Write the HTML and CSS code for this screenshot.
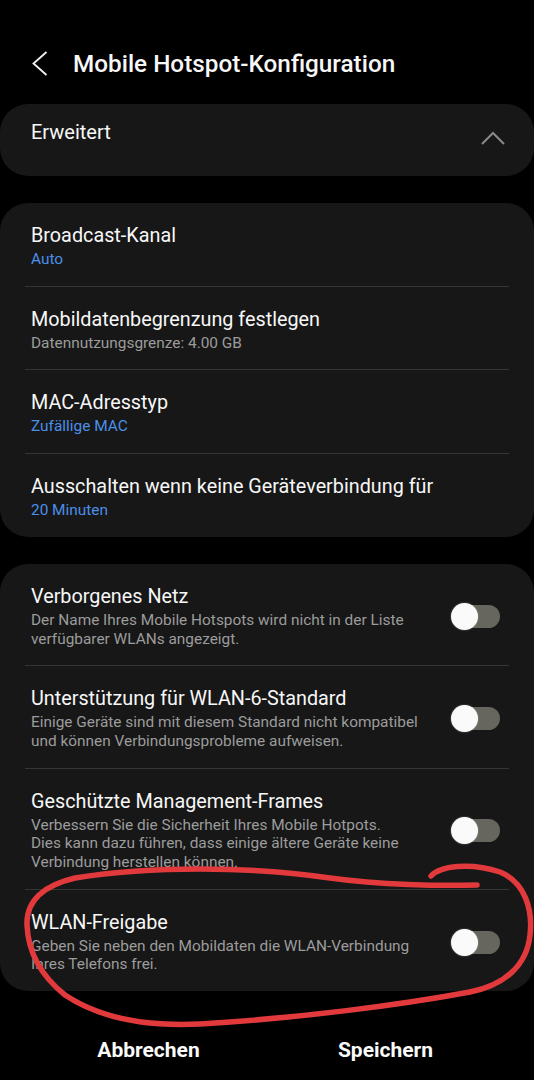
FILE: index.html
```html
<!DOCTYPE html>
<html lang="de">
<head>
    <meta charset="UTF-8">
    <meta name="viewport" content="width=device-width, initial-scale=1.0">
    <title>Mobile Hotspot-Konfiguration</title>
    <link rel="stylesheet" href="styles.css">
</head>
<body>

    <header class="topbar">
        <svg class="back-icon" viewBox="0 0 16 26"><path d="M14.5 1 L1.5 12.5 L14.5 24"/></svg>
        <h1>Mobile Hotspot-Konfiguration</h1>
    </header>

    <main>
        <section class="card expander">
            <span class="expander-title">Erweitert</span>
            <svg class="chevron-up" viewBox="0 0 24 14"><path d="M1 13 L12 2 L23 13"/></svg>
        </section>

        <section class="card list">
            <div class="row">
                <div class="row-text">
                    <p class="row-title">Broadcast-Kanal</p>
                    <p class="row-sub accent">Auto</p>
                </div>
            </div>
            <div class="row">
                <div class="row-text">
                    <p class="row-title">Mobildatenbegrenzung festlegen</p>
                    <p class="row-sub">Datennutzungsgrenze: 4.00 GB</p>
                </div>
            </div>
            <div class="row">
                <div class="row-text">
                    <p class="row-title">MAC-Adresstyp</p>
                    <p class="row-sub accent">Zufällige MAC</p>
                </div>
            </div>
            <div class="row">
                <div class="row-text">
                    <p class="row-title">Ausschalten wenn keine Geräteverbindung für</p>
                    <p class="row-sub accent">20 Minuten</p>
                </div>
            </div>
        </section>

        <section class="card list">
            <div class="row">
                <div class="row-text">
                    <p class="row-title">Verborgenes Netz</p>
                    <p class="row-sub">Der Name Ihres Mobile Hotspots wird nicht in der Liste<br>verfügbarer WLANs angezeigt.</p>
                </div>
                <span class="switch"></span>
            </div>
            <div class="row">
                <div class="row-text">
                    <p class="row-title">Unterstützung für WLAN-6-Standard</p>
                    <p class="row-sub">Einige Geräte sind mit diesem Standard nicht kompatibel<br>und können Verbindungsprobleme aufweisen.</p>
                </div>
                <span class="switch"></span>
            </div>
            <div class="row">
                <div class="row-text">
                    <p class="row-title">Geschützte Management-Frames</p>
                    <p class="row-sub">Verbessern Sie die Sicherheit Ihres Mobile Hotpots.<br>Dies kann dazu führen, dass einige ältere Geräte keine<br>Verbindung herstellen können.</p>
                </div>
                <span class="switch"></span>
            </div>
            <div class="row">
                <div class="row-text">
                    <p class="row-title">WLAN-Freigabe</p>
                    <p class="row-sub">Geben Sie neben den Mobildaten die WLAN-Verbindung<br>Ihres Telefons frei.</p>
                </div>
                <span class="switch"></span>
            </div>
        </section>
    </main>

    <footer class="actions">
        <button>Abbrechen</button>
        <button>Speichern</button>
    </footer>

    <!-- rote Markierung um WLAN-Freigabe -->
    <svg class="scribble" viewBox="0 0 534 1080">
        <path d="M431 876 C440 866, 470 862, 500 872 C525 882, 533 910, 530 935 C527 965, 505 985, 470 992 C400 1005, 300 1018, 200 1024 C140 1027, 95 1015, 65 995 C40 975, 28 950, 27 925 C26 900, 45 885, 75 878 C150 866, 250 866, 330 878 C380 885, 440 886, 477 885"/>
    </svg>

</body>
</html>
```

FILE: styles.css
```css
body {
    margin: 0;
    background-color: #000;
    color: #f7f7f7;
    font-family: Roboto, "Noto Sans", sans-serif;
    width: 534px;
    height: 1080px;
    overflow: hidden;
    position: relative;
}
.topbar {
    display: flex;
    align-items: center;
    height: 32px;
    padding: 48px 0 0 32px;
    margin-bottom: 24px;
}
.back-icon {
    width: 16px;
    height: 26px;
    fill: none;
    stroke: #f2f2f2;
    stroke-width: 1.8;
}
.topbar h1 {
    margin: 0 0 0 25px;
    font-size: 24.3px;
    font-weight: 500;
    line-height: 32px;
}
.card {
    background-color: #171717;
    border-radius: 28px;
}
.expander {
    display: flex;
    justify-content: space-between;
    align-items: flex-start;
    height: 72px;
    box-sizing: border-box;
    padding: 16px 29px 0 31px;
}
.expander-title {
    font-size: 20px;
    line-height: 24px;
}
.chevron-up {
    width: 24px;
    height: 14px;
    margin-top: 11px;
    fill: none;
    stroke: #8a8a8a;
    stroke-width: 2;
}
.list {
    margin-top: 27px;
}
.row {
    display: flex;
    align-items: center;
    margin: 0 25px;
    padding: 21px 9px 17px 6px;
}
.row + .row {
    border-top: 1px solid #363636;
}
.row-text {
    flex: 1;
}
.row-title {
    margin: 0;
    font-size: 19.8px;
    line-height: 24px;
}
.row-sub {
    margin: 2px 0 0;
    font-size: 15.4px;
    line-height: 18.7px;
    color: #9c9c9c;
}
.row-sub.accent {
    color: #4b8fe8;
}
.switch {
    position: relative;
    width: 49px;
    height: 27px;
    flex-shrink: 0;
}
.switch::before {
    content: "";
    position: absolute;
    left: 2px;
    top: 2px;
    width: 47px;
    height: 23px;
    border-radius: 12px;
    background-color: #66665f;
}
.switch::after {
    content: "";
    position: absolute;
    left: 0;
    top: 0;
    width: 27px;
    height: 27px;
    border-radius: 50%;
    background-color: #fafafa;
    box-shadow: 0 0 2px rgba(255, 255, 255, 0.4);
}
.actions {
    display: flex;
    padding: 45px 30px 0;
}
.actions button {
    flex: 1;
    padding: 0;
    background: none;
    border: none;
    color: #fafafa;
    font-family: Roboto, "Noto Sans", sans-serif;
    font-size: 21px;
    font-weight: 700;
    line-height: 28px;
}
.scribble {
    position: absolute;
    top: 0;
    left: 0;
    width: 534px;
    height: 1080px;
    pointer-events: none;
    fill: none;
    stroke: #e23a3c;
    stroke-width: 5.5;
    stroke-linecap: round;
    stroke-linejoin: round;
}
```
